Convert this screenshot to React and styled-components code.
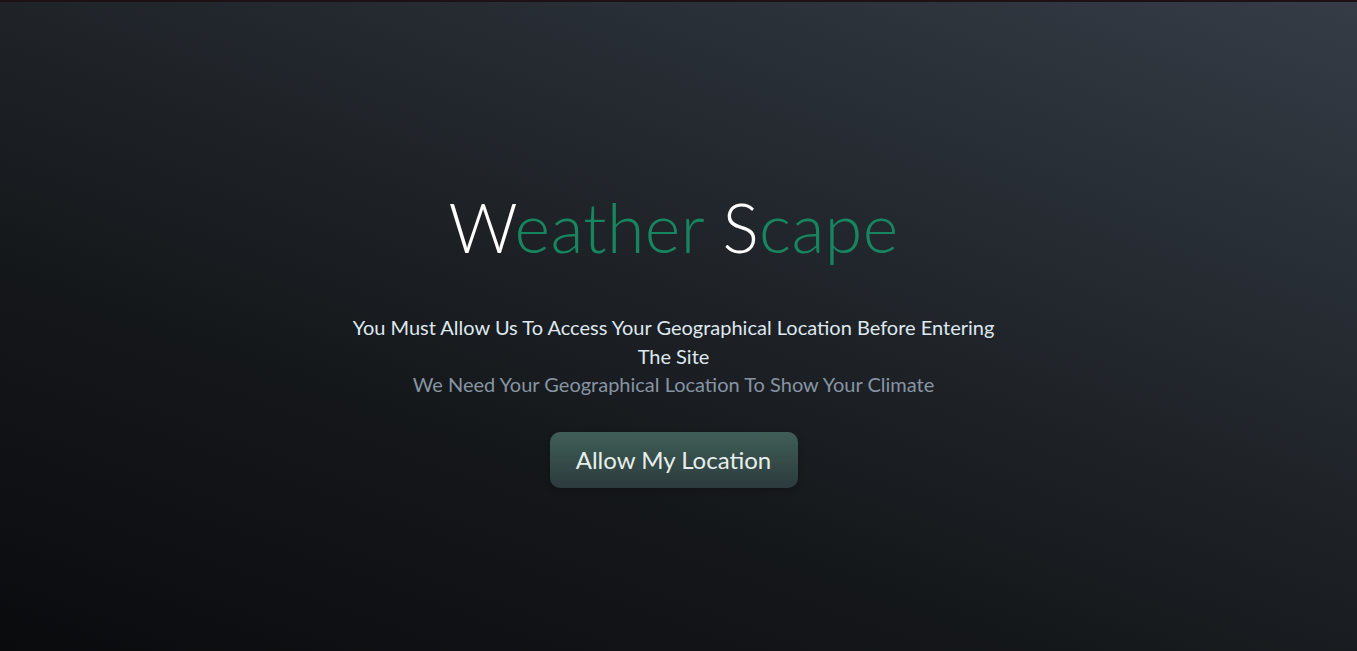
import React from 'react';
import styled, {createGlobalStyle} from 'styled-components';

const GlobalStyle = createGlobalStyle`
  html, body {
    margin: 0;
    padding: 0;
    height: 100%;
  }
  body {
    font-family: Lato, "Open Sans", sans-serif;
    background: #0b0c0e;
  }
`;

const Page = styled.div`
  display: flex;
  flex-direction: column;
  align-items: center;
  width: 100%;
  height: 651px;
  box-sizing: border-box;
  border-top: 2px solid #1d1114;
  background: linear-gradient(200deg, #353c46 0%, #23282e 35%, #15181b 65%, #0a0b0d 100%);
  padding: 183px 10px 0 0;
`;

const Title = styled.h1`
  margin: 0;
  font-family: Lato, sans-serif;
  font-weight: 300;
  font-size: 68px;
  line-height: 84px;
  letter-spacing: 0.4px;
  color: #17855f;
`;

const Cap = styled.span`
  color: #ffffff;
`;

const Message = styled.p`
  margin: 44px 0 0;
  width: 660px;
  text-align: center;
  font-size: 20px;
  line-height: 28.5px;
  color: ${props => props.muted ? '#8795a3' : '#dfe8ef'};
`;

const Hint = styled(Message)`
  margin-top: 0;
`;

const AllowButton = styled.button`
  margin-top: 33px;
  width: 248px;
  height: 56px;
  border: none;
  border-radius: 10px;
  background: linear-gradient(180deg, #3f5f56 0%, #2c3a3d 100%);
  color: #e8efeb;
  font-family: Lato, sans-serif;
  font-size: 24px;
  cursor: pointer;
  box-shadow: 0 2px 6px rgba(0, 0, 0, 0.25);
`;

const App = () => {
    return (
        <Page>
            <GlobalStyle />
            <Title><Cap>W</Cap>eather <Cap>S</Cap>cape</Title>
            <Message>You Must Allow Us To Access Your Geographical Location Before Entering The Site</Message>
            <Hint muted>We Need Your Geographical Location To Show Your Climate</Hint>
            <AllowButton>Allow My Location</AllowButton>
        </Page>
    );
}

export default App
